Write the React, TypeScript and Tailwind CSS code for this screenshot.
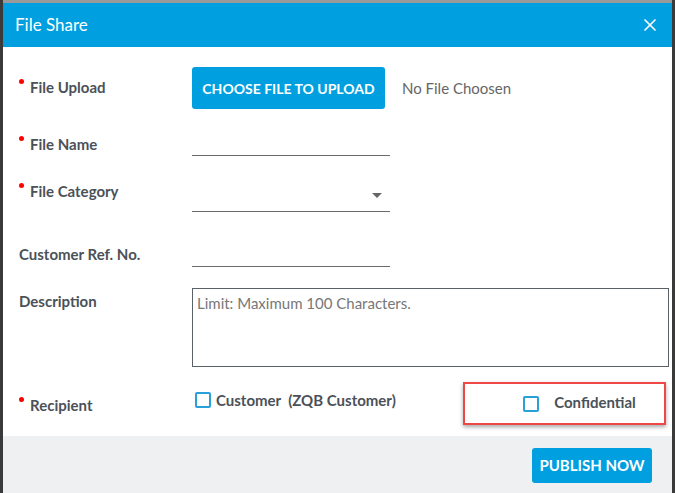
import { X } from "lucide-react";

const font = { fontFamily: "Lato, 'Open Sans', sans-serif" };

function Label({ text, required, pt }: { text: string; required?: boolean; pt: string }) {
  return (
    <div className={`w-[173px] shrink-0 ${pt}`}>
      <div className="relative flex items-center text-[15px] font-bold leading-5 text-[#4b5158]">
        {required && <span className="absolute left-0 top-[2px] h-[5px] w-[5px] rounded-full bg-[#f00]" />}
        <span className={required ? "pl-[11px]" : ""}>{text}</span>
      </div>
    </div>
  );
}

function Checkbox() {
  return <span className="inline-block h-[16px] w-[16px] rounded-[2px] border-2 border-[#2a9fd8] bg-white" />;
}

export default function App() {
  return (
    <div className="h-[493px] w-[675px] overflow-hidden bg-[#3a3a3a]" style={font}>
      <div className="ml-[3px] mr-[3px] h-[3px] bg-[#9a9a9a]" />
      <div className="ml-[3px] mr-[3px] flex h-[490px] flex-col bg-white">
        <header className="flex h-[44px] items-center justify-between bg-[#009fe0] pl-[12px] pr-[12px]">
          <h1 className="text-[17px] font-normal text-white">File Share</h1>
          <X className="h-[20px] w-[20px] text-white" strokeWidth={2} />
        </header>

        <div className="flex flex-1 flex-col pl-[16px] pt-[20px]">
          <div className="flex h-[42px]">
            <Label text="File Upload" required pt="pt-[10px]" />
            <button className="h-[42px] w-[193px] rounded-[3px] bg-[#009fe0] text-[14px] font-bold text-white">
              CHOOSE FILE TO UPLOAD
            </button>
            <span className="ml-[17px] self-center text-[15px] text-[#666]">No File Choosen</span>
          </div>

          <div className="mt-[19px] flex h-[28px]">
            <Label text="File Name" required pt="pt-[6px]" />
            <div className="w-[198px] border-b border-[#6b6b6b]" />
          </div>

          <div className="flex h-[56px]">
            <Label text="File Category" required pt="pt-[25px]" />
            <div className="relative w-[198px] border-b border-[#6b6b6b]">
              <span className="absolute right-[8px] top-[37px] h-0 w-0 border-x-[5px] border-t-[5px] border-x-transparent border-t-[#666]" />
            </div>
          </div>

          <div className="flex h-[55px]">
            <Label text="Customer Ref. No." pt="pt-[32px]" />
            <div className="w-[198px] border-b border-[#6b6b6b]" />
          </div>

          <div className="mt-[21px] flex h-[79px]">
            <Label text="Description" pt="pt-[3px]" />
            <div className="mr-[3px] flex-1 border border-[#5a6268] px-[4px] pt-[4px] text-[15px] leading-5 text-[#777]">
              Limit: Maximum 100 Characters.
            </div>
          </div>

          <div className="mt-[15px] flex h-[43px]">
            <Label text="Recipient" required pt="pt-[13px]" />
            <div className="flex items-center gap-[5px] self-start pt-[7px] pl-[3px] text-[15px] font-bold text-[#4b5158]">
              <Checkbox />
              <span className="whitespace-pre">Customer  (ZQB Customer)</span>
            </div>
            <div className="ml-[67px] flex h-[43px] w-[203px] items-start justify-end gap-[15px] border-2 border-[#ef4646] pr-[28px] pt-[8px] shadow-[0_2px_4px_rgba(0,0,0,0.35)]">
              <span className="mt-[2px]"><Checkbox /></span>
              <span className="text-[15px] font-bold leading-5 text-[#4b5158]">Confidential</span>
            </div>
          </div>
        </div>

        <footer className="flex h-[57px] items-start justify-end bg-[#eef0f1] pr-[20px] pt-[12px]">
          <button className="h-[35px] w-[120px] rounded-[3px] bg-[#009fe0] text-[15px] font-bold text-white">
            PUBLISH NOW
          </button>
        </footer>
      </div>
    </div>
  );
}
